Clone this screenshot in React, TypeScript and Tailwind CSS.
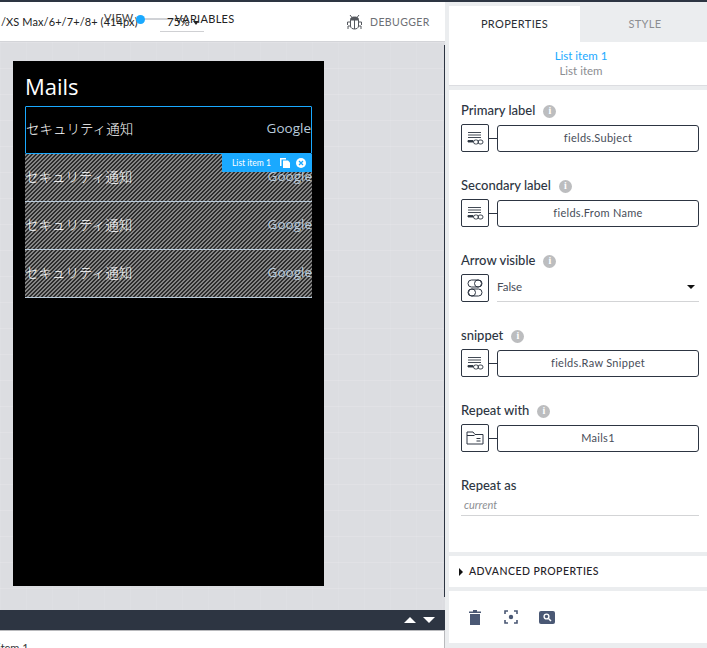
type FieldProps = {
  label: string;
  icon: "text" | "folder";
  value: string;
};

const ui = "font-['Lato',sans-serif]";

function InfoDot() {
  return (
    <span className="flex h-[13px] w-[13px] items-center justify-center rounded-full bg-[#bcbdbf] font-['Liberation_Serif',serif] text-[10px] font-bold leading-none text-white">
      i
    </span>
  );
}

function FieldLabel({ label, info = true }: { label: string; info?: boolean }) {
  return (
    <div className="mb-[5px] flex h-5 items-center gap-2 pt-[4px] text-[13px] font-medium text-[#2d3542]">
      <span>{label}</span>
      {info && <InfoDot />}
    </div>
  );
}

function TextBindIcon() {
  return (
    <svg width="17" height="14" viewBox="0 0 17 14" fill="none" stroke="#2d3542" strokeWidth="0.9">
      <path d="M1 1.5h13M1 4h13M1 6.5h13" />
      <path d="M1 9.5h5V11H1z" fill="#2d3542" />
      <rect x="6.5" y="9" width="5" height="4" rx="2" />
      <rect x="11" y="9" width="5" height="4" rx="2" />
    </svg>
  );
}

function FolderIcon() {
  return (
    <svg width="18" height="14" viewBox="0 0 18 14" fill="none" stroke="#2d3542" strokeWidth="1">
      <path d="M1 13V1h6l2 2.5h8V13z" />
      <path d="M1 4.5h7.5" />
      <path d="M10.5 7.5h4M10.5 10h4" />
    </svg>
  );
}

function ToggleIcon() {
  return (
    <svg width="16" height="18" viewBox="0 0 16 18" fill="none" stroke="#2d3542" strokeWidth="1">
      <rect x="1" y="1" width="14" height="7" rx="3.5" />
      <circle cx="11" cy="4.5" r="3.5" />
      <rect x="1" y="10" width="14" height="7" rx="3.5" />
      <circle cx="5" cy="13.5" r="3.5" />
    </svg>
  );
}

function IconBox({ children }: { children: React.ReactNode }) {
  return (
    <div className="flex h-[28px] w-[28px] shrink-0 items-center justify-center rounded-[2px] border border-[#2d3542]">
      {children}
    </div>
  );
}

function BindField({ label, icon, value }: FieldProps) {
  return (
    <div className="mb-[22px]">
      <FieldLabel label={label} />
      <div className="flex h-[28px] items-center">
        <IconBox>{icon === "text" ? <TextBindIcon /> : <FolderIcon />}</IconBox>
        <div className="h-px w-2 bg-[#2d3542]" />
        <div className="flex h-[27px] flex-1 items-center justify-center rounded-[3px] border border-[#2d3542] text-[11px] tracking-[0.3px] text-[#474d59]">
          {value}
        </div>
      </div>
    </div>
  );
}

function ListRow({ first }: { first?: boolean }) {
  return (
    <div
      className={
        first
          ? "flex h-[48px] items-center justify-between rounded-[1px] border border-[#1aa9ff] pb-[3px]"
          : "flex h-[48px] items-center justify-between border-b border-[#b9cbdb] bg-[linear-gradient(135deg,#868686_25%,#2c2c2c_25%,#2c2c2c_50%,#868686_50%,#868686_75%,#2c2c2c_75%)] bg-[length:4px_4px] pb-[1px]"
      }
    >
      <span className="font-['Noto_Sans_CJK_JP',sans-serif] text-[13.5px] font-light leading-none text-white">
        セキュリティ通知
      </span>
      <span className="font-['Open_Sans',sans-serif] text-[13.5px] leading-none text-[#b9cbdb]">
        Google
      </span>
    </div>
  );
}

function Toolbar() {
  return (
    <div className={`relative h-[40px] shrink-0 overflow-hidden border-b border-[#d3d4d8] bg-white ${ui}`}>
      <span className="absolute left-[1px] top-[13px] whitespace-nowrap text-[11px] leading-[14px] tracking-[0.1px] text-[#222]">
        /XS Max/6+/7+/8+ (414px)
      </span>
      <span className="absolute left-[104px] top-[9px] text-[11px] leading-[14px] tracking-[0.3px] text-[#444]">VIEW</span>
      <div className="absolute left-[140px] top-[16px] h-[2px] w-[36px] bg-[#d0d2d6]" />
      <div className="absolute left-[136px] top-[13px] h-[9px] w-[9px] rounded-full bg-[#1aa9ff]" />
      <span className="absolute left-[167px] top-[13px] text-[11.5px] leading-[14px] text-[#222]">75%</span>
      <div className="absolute left-[193px] top-[19px] h-0 w-0 border-x-[3.5px] border-t-[4px] border-x-transparent border-t-[#222]" />
      <div className="absolute left-[160px] top-[29px] h-px w-[44px] bg-[#cfd0d3]" />
      <span className="absolute left-[175px] top-[10px] text-[11px] leading-[14px] tracking-[0.3px] text-[#222]">VARIABLES</span>
      <svg className="absolute left-[346px] top-[12px]" width="17" height="16" viewBox="0 0 17 16" fill="none" stroke="#55585e" strokeWidth="1">
        <path d="M4 1l2 2.5M13 1l-2 2.5" />
        <path d="M4.5 5.5c0-2 2-2.5 4-2.5s4 .5 4 2.5z" fill="#55585e" />
        <path d="M4.5 6h8v6c0 2-2 3-4 3s-4-1-4-3z" />
        <path d="M8.5 6v9M4.5 8H1.5v3M12.5 8h3v3M4.5 12H2v3M12.5 12H15v3" />
      </svg>
      <span className="absolute left-[370px] top-[13px] text-[10.5px] leading-[14px] tracking-[0.4px] text-[#6d7075]">DEBUGGER</span>
    </div>
  );
}

function Phone() {
  return (
    <div className="relative ml-[13px] mt-[19px] h-[525px] w-[311px] bg-black px-3 pt-[12px]">
      <div className="mb-[9px] h-[24px] font-['Open_Sans',sans-serif] text-[22px] font-medium leading-[26px] text-white">Mails</div>
      <ListRow first />
      <ListRow />
      <ListRow />
      <ListRow />
      <div className="absolute left-[209px] top-[93px] flex h-[18px] w-[90px] items-center bg-[#1aa9ff] pl-[10px] font-['Lato',sans-serif] text-[8.5px] text-white">
        <span className="w-[44px] whitespace-nowrap">List item 1</span>
        <svg className="ml-[4px]" width="11" height="10" viewBox="0 0 11 10" fill="white">
          <path d="M0 0h6v1.5H1.5V8H0z" />
          <path d="M3 2.5h5l2 2V10H3z" />
        </svg>
        <svg className="ml-[5px]" width="10" height="10" viewBox="0 0 10 10">
          <circle cx="5" cy="5" r="5" fill="white" />
          <path d="M3 3l4 4M7 3l-4 4" stroke="#1aa9ff" strokeWidth="1.3" />
        </svg>
      </div>
    </div>
  );
}

function Workspace() {
  return (
    <div className="flex w-[445px] shrink-0 flex-col">
      <Toolbar />
      <div className="relative flex-1 overflow-hidden bg-[#dcdde1] bg-[linear-gradient(rgba(255,255,255,0.13)_1px,transparent_1px),linear-gradient(90deg,rgba(255,255,255,0.07)_1px,transparent_1px)] bg-[length:26px_26px]">
        <Phone />
        <div className="absolute right-0 top-[3px] h-[552px] w-px bg-[#2d3542]" />
      </div>
      <div className="flex h-[20px] shrink-0 items-center justify-end gap-[7px] bg-[#2d3542] pr-[10px]">
        <div className="h-0 w-0 border-x-[6px] border-b-[6px] border-x-transparent border-b-white" />
        <div className="h-0 w-0 border-x-[6px] border-t-[6px] border-x-transparent border-t-white" />
      </div>
      <div className={`-ml-[2px] h-[18px] shrink-0 overflow-hidden border-r border-t border-[#b9babd] bg-white pt-[11px] text-[11px] leading-none text-[#333] ${ui}`}>
        item 1
      </div>
    </div>
  );
}

function Properties() {
  return (
    <div className={`flex flex-1 flex-col bg-[#ebedef] pl-1 pt-1 ${ui}`}>
      <div className="flex h-[36px] shrink-0">
        <div className="flex w-[131px] items-center justify-center bg-white text-[11px] tracking-[0.35px] text-[#2b2f36]">PROPERTIES</div>
        <div className="flex flex-1 items-center justify-center pl-[3px] text-[11px] tracking-[0.35px] text-[#8b8d91]">STYLE</div>
      </div>
      <div className="flex h-[43px] shrink-0 flex-col items-center justify-center bg-white pb-[2px] pl-[6px] leading-[15px]">
        <span className="text-[11.5px] text-[#1aa9ff]">List item 1</span>
        <span className="text-[11.5px] text-[#8b8d91]">List item</span>
      </div>
      <div className="h-[5px] shrink-0 border-t border-[#dcdde1]" />
      <div className="h-[462px] shrink-0 bg-white pl-3 pr-2 pt-[9px]">
        <BindField label="Primary label" icon="text" value="fields.Subject" />
        <BindField label="Secondary label" icon="text" value="fields.From Name" />
        <div className="mb-[22px]">
          <FieldLabel label="Arrow visible" />
          <div className="flex h-[28px] items-center">
            <IconBox>
              <ToggleIcon />
            </IconBox>
            <div className="ml-2 flex h-[27px] flex-1 items-center justify-between border-b border-[#d3d4d6] pb-[1px] text-[11.5px] text-[#474d59]">
              <span>False</span>
              <div className="mr-1 h-0 w-0 border-x-[4px] border-t-[4px] border-x-transparent border-t-[#111]" />
            </div>
          </div>
        </div>
        <BindField label="snippet" icon="text" value="fields.Raw Snippet" />
        <BindField label="Repeat with" icon="folder" value="Mails1" />
        <FieldLabel label="Repeat as" info={false} />
        <div className="h-[17px] border-b border-[#d3d4d6] pl-[3px] text-[11px] italic leading-[12px] text-[#8d8f93]">current</div>
      </div>
      <div className="mt-1 flex h-[31px] shrink-0 items-center gap-[6px] bg-white pl-[10px] text-[10.5px] font-medium tracking-[0.45px] text-[#1f2228]">
        <div className="h-0 w-0 border-y-[4px] border-l-[4px] border-y-transparent border-l-[#111]" />
        ADVANCED PROPERTIES
      </div>
      <div className="mt-1 flex h-[52px] shrink-0 items-center bg-white pl-[20px]">
        <svg width="12" height="15" viewBox="0 0 12 15" fill="#4a5874">
          <path d="M0 1.5h4V0h4v1.5h4V3H0zM1 4h10v11H1z" />
        </svg>
        <svg className="ml-[23px]" width="14" height="14" viewBox="0 0 14 14" fill="none" stroke="#4a5874" strokeWidth="1.6">
          <path d="M1 4V1h3M10 1h3v3M13 10v3h-3M4 13H1v-3" />
          <circle cx="7" cy="7" r="2.2" fill="#4a5874" stroke="none" />
        </svg>
        <svg className="ml-[21px]" width="16" height="13" viewBox="0 0 16 13">
          <rect width="16" height="13" rx="2" fill="#4a5874" />
          <circle cx="7.5" cy="5.5" r="2.4" fill="none" stroke="white" strokeWidth="1.4" />
          <path d="M9.5 7.5l2.5 2.5" stroke="white" strokeWidth="1.5" />
        </svg>
      </div>
    </div>
  );
}

export default function App() {
  return (
    <div className="flex h-[648px] w-[707px] flex-col overflow-hidden bg-white">
      <div className="h-[2px] shrink-0 bg-[#2d3542]" />
      <div className="flex min-h-0 flex-1">
        <Workspace />
        <Properties />
      </div>
    </div>
  );
}
